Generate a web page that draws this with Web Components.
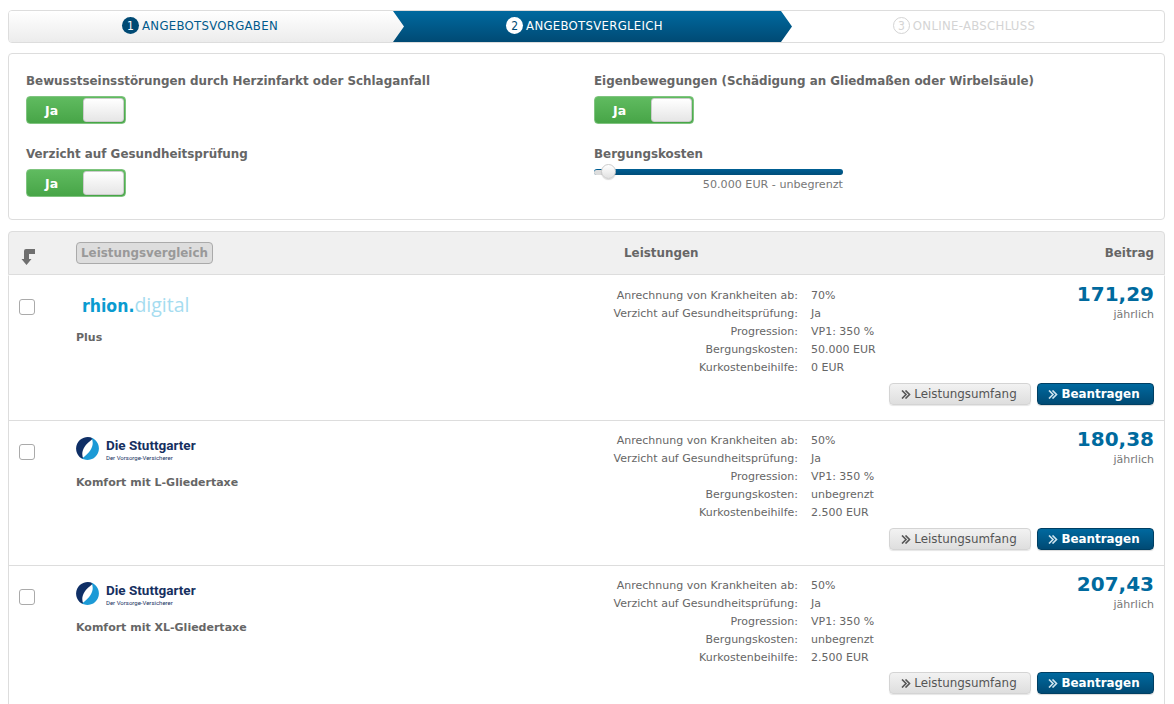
<!DOCTYPE html>
<html lang="de">
<head>
<meta charset="utf-8">
<title>Angebotsvergleich</title>
<style>
  html { overflow: hidden; }
  body {
    margin: 0;
    padding: 10px 9px 0 8px;
    background: #fff;
    color: #666;
    font-family: "DejaVu Sans", Verdana, sans-serif;
    font-size: 11px;
  }
  step-bar, filter-panel { margin-bottom: 10px; }
  offer-row:first-of-type { height: 146px; border-top: 1px solid #fff; padding-top: 11px; }
  offer-row + offer-row { padding-top: 11px; }
  offer-row:last-of-type { grid-template-rows: 95px 22px; }
</style>
</head>
<body>
<step-bar></step-bar>
<filter-panel>
  <filter-toggle label="Bewusstseinsstörungen durch Herzinfarkt oder Schlaganfall"></filter-toggle>
  <filter-toggle label="Eigenbewegungen (Schädigung an Gliedmaßen oder Wirbelsäule)"></filter-toggle>
  <filter-toggle label="Verzicht auf Gesundheitsprüfung"></filter-toggle>
  <filter-slider label="Bergungskosten" value="50.000 EUR - unbegrenzt"></filter-slider>
</filter-panel>
<offer-head></offer-head>
<offer-row logo="rhion" tariff="Plus" price="171,29" values="70%|Ja|VP1: 350 %|50.000 EUR|0 EUR"></offer-row>
<offer-row logo="stuttgarter" tariff="Komfort mit L-Gliedertaxe" price="180,38" values="50%|Ja|VP1: 350 %|unbegrenzt|2.500 EUR"></offer-row>
<offer-row logo="stuttgarter" tariff="Komfort mit XL-Gliedertaxe" price="207,43" values="50%|Ja|VP1: 350 %|unbegrenzt|2.500 EUR"></offer-row>

<script>
class StepBar extends HTMLElement {
  constructor () {
    super()
    this.shadow = this.attachShadow({ mode: 'open' })
  }
  connectedCallback () {
    this.shadow.innerHTML = `
    <style>
      :host {
        display: grid;
        grid-template-columns: 384px 387px 1fr;
        height: 33px;
        box-sizing: border-box;
        border: 1px solid #ddd;
        border-radius: 4px;
        background: #fff;
        overflow: hidden;
        font-family: "DejaVu Sans Condensed", "DejaVu Sans", sans-serif;
        font-size: 13px;
        letter-spacing: .3px;
      }
      .step {
        display: flex;
        align-items: center;
        justify-content: center;
        gap: 3px;
        padding-bottom: 2px;
      }
      .num {
        width: 17px;
        height: 17px;
        box-sizing: border-box;
        border-radius: 50%;
        display: flex;
        align-items: center;
        justify-content: center;
        font-size: 12px;
        letter-spacing: 0;
      }
      .one {
        margin-right: -12px;
        padding-right: 14px;
        background: linear-gradient(#fff, #ececec);
        color: #005a8c;
      }
      .one .num { background: #004a74; color: #fff; }
      .two {
        margin-right: -12px;
        padding-right: 16px;
        background: linear-gradient(#00699f, #004a74);
        color: #fff;
        clip-path: polygon(0 0, calc(100% - 11px) 0, 100% 50%, calc(100% - 11px) 100%, 0 100%, 11px 50%);
      }
      .two .num { background: #fff; color: #004a74; }
      .three { color: #d4d4d4; padding-right: 16px; }
      .three .num { border: 1px solid #d4d4d4; }
    </style>
    <div class="step one"><span class="num">1</span>ANGEBOTSVORGABEN</div>
    <div class="step two"><span class="num">2</span>ANGEBOTSVERGLEICH</div>
    <div class="step three"><span class="num">3</span>ONLINE-ABSCHLUSS</div>
    `
  }
}

class FilterPanel extends HTMLElement {
  constructor () {
    super()
    this.shadow = this.attachShadow({ mode: 'open' })
  }
  connectedCallback () {
    this.shadow.innerHTML = `
    <style>
      :host {
        display: grid;
        grid-template-columns: 568px 1fr;
        row-gap: 22px;
        align-content: start;
        height: 167px;
        box-sizing: border-box;
        padding: 19px 17px 0;
        border: 1px solid #ddd;
        border-radius: 4px;
        background: #fff;
      }
    </style>
    <slot></slot>
    `
  }
}

class FilterToggle extends HTMLElement {
  constructor () {
    super()
    this.shadow = this.attachShadow({ mode: 'open' })
  }
  connectedCallback () {
    this.shadow.innerHTML = `
    <style>
      :host { display: block; }
      .label { font-size: 11.9px; font-weight: bold; line-height: 16px; margin-bottom: 7px; color: #666; white-space: nowrap; }
      .switch {
        width: 100px;
        height: 28px;
        box-sizing: border-box;
        border: 1px solid #7fc47f;
        border-radius: 4px;
        background: linear-gradient(#60bb60, #47a547);
        display: flex;
        align-items: center;
        justify-content: space-between;
        padding: 0 1px 0 18px;
        color: #fff;
        font-size: 12.5px;
        font-weight: bold;
      }
      .knob {
        width: 41px;
        height: 24px;
        box-sizing: border-box;
        border-radius: 3px;
        border: 1px solid #ccc;
        background: linear-gradient(#fff, #e6e6e6);
      }
    </style>
    <div class="label">${this.getAttribute('label')}</div>
    <div class="switch"><span>Ja</span><span class="knob"></span></div>
    `
  }
}

class FilterSlider extends HTMLElement {
  constructor () {
    super()
    this.shadow = this.attachShadow({ mode: 'open' })
  }
  connectedCallback () {
    this.shadow.innerHTML = `
    <style>
      :host { display: block; width: 249px; }
      .label { font-size: 11.9px; font-weight: bold; line-height: 16px; color: #666; white-space: nowrap; }
      .track {
        position: relative;
        height: 6px;
        margin-top: 7px;
        border-radius: 3px;
        background: linear-gradient(#005f94, #004e7a);
      }
      .low {
        position: absolute;
        left: 0; top: 1px; bottom: 0;
        width: 14px;
        border-radius: 3px 0 0 3px;
        background: #ddd;
      }
      .thumb {
        position: absolute;
        left: 7px;
        top: -5px;
        width: 15px;
        height: 15px;
        box-sizing: border-box;
        border: 1px solid #ccc;
        border-radius: 50%;
        background: linear-gradient(#fff, #e2e2e2);
        box-shadow: 0 1px 1px rgba(0,0,0,.15);
      }
      .value { text-align: right; font-size: 11.15px; line-height: 14px; margin-top: 3px; color: #777; white-space: nowrap; }
    </style>
    <div class="label">${this.getAttribute('label')}</div>
    <div class="track"><span class="low"></span><span class="thumb"></span></div>
    <div class="value">${this.getAttribute('value')}</div>
    `
  }
}

class OfferHead extends HTMLElement {
  constructor () {
    super()
    this.shadow = this.attachShadow({ mode: 'open' })
  }
  connectedCallback () {
    this.shadow.innerHTML = `
    <style>
      :host {
        display: grid;
        grid-template-columns: 55px 548px 1fr;
        align-items: center;
        height: 44px;
        box-sizing: border-box;
        padding: 0 10px 0 12px;
        margin-top: 11px;
        background: #f0f0f0;
        border: 1px solid #ddd;
        border-radius: 4px 4px 0 0;
        font-size: 11.9px;
        font-weight: bold;
        color: #666;
      }
      svg { display: block; margin-top: 8px; }
      button {
        justify-self: start;
        height: 22px;
        width: 137px;
        padding: 0;
        border: 1px solid #aaa;
        border-radius: 4px;
        background: #ddd;
        color: #999;
        font: inherit;
      }
      .head-right { display: flex; justify-content: space-between; }
    </style>
    <svg width="14" height="18" viewBox="0 0 14 18"><path d="M14 1H5Q3 1 3 3V11H.5L5.5 17 10.5 11H8V6H14Z" fill="#6f6f6f"/></svg>
    <button disabled>Leistungsvergleich</button>
    <div class="head-right"><span>Leistungen</span><span>Beitrag</span></div>
    `
  }
}

const SERVICE_LABELS = [
  'Anrechnung von Krankheiten ab:',
  'Verzicht auf Gesundheitsprüfung:',
  'Progression:',
  'Bergungskosten:',
  'Kurkostenbeihilfe:'
]

const SWIRL = 'M17 1.4A11.5 11.5 0 1 0 7.5 22.3C5.5 18 6 14 8.5 10 10 7 13 5 17 1.4Z'

class OfferRow extends HTMLElement {
  constructor () {
    super()
    this.shadow = this.attachShadow({ mode: 'open' })
  }
  logo () {
    if (this.getAttribute('logo') === 'rhion') {
      return `<div class="rhion"><b>rhion.</b><span>digital</span></div>`
    }
    return `
    <div class="stuttgarter">
      <svg width="23" height="23" viewBox="0 0 23 23">
        <path d="${SWIRL}" fill="#0f2f66"/>
        <path d="${SWIRL}" transform="rotate(180 11.5 11.5)" fill="#1c9ad6"/>
      </svg>
      <div class="brand"><b>Die Stuttgarter</b><small>Der Vorsorge-Versicherer</small></div>
    </div>`
  }
  connectedCallback () {
    const values = this.getAttribute('values').split('|')
    const services = SERVICE_LABELS.map((label, i) => `<dt>${label}</dt><dd>${values[i]}</dd>`).join('')
    this.shadow.innerHTML = `
    <style>
      :host {
        display: grid;
        grid-template-columns: 57px 537px 266px 1fr;
        grid-template-rows: 96px 22px;
        height: 145px;
        box-sizing: border-box;
        padding: 12px 10px 0 10px;
        border: 1px solid #ddd;
        border-top: 0;
        font-size: 11px;
        color: #666;
      }
      input {
        appearance: none;
        width: 16px;
        height: 16px;
        margin: 12px 0 0;
        border: 1px solid #aaa;
        border-radius: 3px;
        background: #fff;
      }
      .logo { height: 30px; }
      .rhion { padding: 6px 0 0 6px; font-family: "Open Sans", sans-serif; font-size: 19.5px; line-height: 24px; }
      .rhion b { color: #0a9bd0; font-family: "DejaVu Sans Condensed", sans-serif; font-size: 17.5px; }
      .rhion span { color: #a5dcf0; }
      .stuttgarter { display: flex; gap: 7px; padding-top: 5px; }
      .brand { display: flex; flex-direction: column; color: #16305f; font-family: Roboto, sans-serif; padding-top: 1px; }
      .brand b { font-size: 13.5px; line-height: 14px; }
      .brand small { font-size: 6px; line-height: 8px; margin-top: 2px; }
      .tariff { margin-top: 14px; font-weight: bold; font-size: 11px; line-height: 14px; white-space: nowrap; }
      dl {
        display: grid;
        grid-template-columns: 185px 1fr;
        grid-auto-rows: 18px;
        column-gap: 13px;
        width: 266px;
        margin: 0;
        line-height: 18px;
        white-space: nowrap;
      }
      dt { text-align: right; }
      dd { margin: 0; }
      .price { text-align: right; }
      .amount { font-size: 20px; font-weight: bold; line-height: 14px; color: #006a9e; }
      .period { font-size: 11px; line-height: 14px; margin-top: 7px; color: #777; }
      .actions {
        grid-column: 3 / 5;
        display: flex;
        justify-content: flex-end;
        gap: 6px;
      }
      button {
        height: 22px;
        padding: 0;
        border-radius: 4px;
        font-family: inherit;
        display: flex;
        align-items: center;
        justify-content: center;
        gap: 3px;
        font-size: 11.9px;
      }
      .more {
        width: 142px;
        padding-right: 2px;
        border: 1px solid #d4d4d4;
        background: linear-gradient(#f2f2f2, #dedede);
        box-shadow: 0 1px 1px rgba(0,0,0,.1);
        color: #555;
      }
      .apply {
        width: 117px;
        padding-right: 3px;
        border: 1px solid #003f63;
        background: linear-gradient(#00699f, #004a74);
        box-shadow: 0 1px 1px rgba(0,0,0,.15);
        color: #fff;
        font-weight: bold;
      }
    </style>
    <input type="checkbox" aria-label="Auswählen">
    <div>
      <div class="logo">${this.logo()}</div>
      <div class="tariff">${this.getAttribute('tariff')}</div>
    </div>
    <dl>${services}</dl>
    <div class="price">
      <div class="amount">${this.getAttribute('price')}</div>
      <div class="period">jährlich</div>
    </div>
    <div class="actions">
      <button class="more"><svg width="10" height="9" viewBox="0 0 10 9"><path d="M1 .5 5 4.5 1 8.5M4.5 .5 8.5 4.5 4.5 8.5" fill="none" stroke="#555" stroke-width="1.6"/></svg>Leistungsumfang</button>
      <button class="apply"><svg width="10" height="9" viewBox="0 0 10 9"><path d="M1 .5 5 4.5 1 8.5M4.5 .5 8.5 4.5 4.5 8.5" fill="none" stroke="#cfe4ef" stroke-width="1.6"/></svg>Beantragen</button>
    </div>
    `
  }
}

customElements.define('step-bar', StepBar)
customElements.define('filter-panel', FilterPanel)
customElements.define('filter-toggle', FilterToggle)
customElements.define('filter-slider', FilterSlider)
customElements.define('offer-head', OfferHead)
customElements.define('offer-row', OfferRow)
</script>
</body>
</html>
